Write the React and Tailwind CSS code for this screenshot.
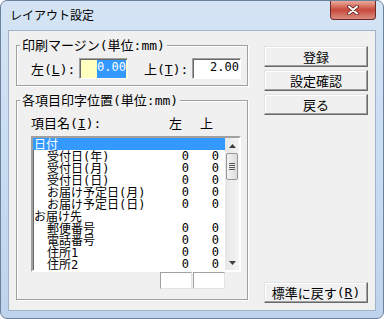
import React from "react";

const JP = "font-['Noto_Sans_CJK_JP',sans-serif]";
const MONO = "font-['DejaVu_Sans_Mono','Noto_Sans_CJK_JP',monospace]";

const rows = [
  { name: "日付", top: true, sel: true },
  { name: "受付日(年)", l: "0", r: "0" },
  { name: "受付日(月)", l: "0", r: "0" },
  { name: "受付日(日)", l: "0", r: "0" },
  { name: "お届け予定日(月)", l: "0", r: "0" },
  { name: "お届け予定日(日)", l: "0", r: "0" },
  { name: "お届け先", top: true },
  { name: "郵便番号", l: "0", r: "0" },
  { name: "電話番号", l: "0", r: "0" },
  { name: "住所1", l: "0", r: "0" },
  { name: "住所2", l: "0", r: "0" },
];

function Button({ children }) {
  return (
    <div className="h-[21px] w-[104px] flex items-center justify-center bg-[#f0f0f0] border border-t-[#e3e3e3] border-l-[#e3e3e3] border-r-[#696969] border-b-[#696969] shadow-[inset_-1px_-1px_0_#a0a0a0,inset_1px_1px_0_#ffffff] text-[13px] leading-[15px] text-black">
      {children}
    </div>
  );
}

function Arrow({ up }) {
  return (
    <svg width="7" height="4" viewBox="0 0 7 4">
      {up ? (
        <polygon points="0,4 7,4 3.5,0" fill="#404040" />
      ) : (
        <polygon points="0,0 7,0 3.5,4" fill="#404040" />
      )}
    </svg>
  );
}

export default function App() {
  return (
    <div className={`w-[384px] h-[319px] overflow-hidden rounded-[7px] border border-[#6a829c] bg-linear-to-b from-[#d4e4f5] to-[#bfd4ec] ${JP}`}>
      {/* title bar */}
      <div className="h-[29px] flex items-start justify-between">
        <div className="pl-[9px] pt-[6px] text-[12px] leading-[16px] text-black">レイアウト設定</div>
        <div className="mr-[7px] w-[46px] h-[19px] rounded-b-[4px] border border-t-0 border-[#6b2b26] bg-linear-to-b from-[#e9a99c] via-[#c7473a] to-[#d98c80] flex items-center justify-center">
          <svg width="12" height="10" viewBox="0 0 12 10">
            <path d="M2 1.5 L10 8.5 M10 1.5 L2 8.5" stroke="#5a1e18" strokeWidth="3.6" strokeLinecap="round" />
            <path d="M2 1.5 L10 8.5 M10 1.5 L2 8.5" stroke="#ffffff" strokeWidth="2" strokeLinecap="round" />
          </svg>
        </div>
      </div>

      {/* client area */}
      <div className="mx-[7px] h-[281px] flex border border-[#9fb3c9] bg-[#f0f0f0] text-black">
        {/* left column */}
        <div className="w-[239px] pl-[7px] flex flex-col">
          {/* group 1 */}
          <fieldset className="mt-[6px] h-[49px] w-[232px] border border-[#a0a0a0] shadow-[inset_1px_1px_0_#ffffff,1px_1px_0_#ffffff]">
            <legend className="ml-[3px] px-[2px] bg-[#f0f0f0] text-[13px] leading-[16px]">
              印刷マージン<span className={MONO}>(</span>単位<span className={MONO}>:mm)</span>
            </legend>
            <div className="mt-[4px] pl-[14px] flex items-start">
              <div className="w-[48px] text-[13px] leading-[21px]">
                左<span className={MONO}>(<span className="underline">L</span>):</span>
              </div>
              <div className="w-[49px] h-[21px] bg-[#ffffc0] border border-t-[#a0a0a0] border-l-[#a0a0a0] border-r-white border-b-white shadow-[inset_1px_1px_0_#696969] flex justify-end pr-[1px] pt-[1px]">
                <span className={`${MONO} text-[12px] leading-[15px] bg-[#3399ff] text-white`}>0.00</span>
              </div>
              <div className="ml-[16px] w-[48px] text-[13px] leading-[21px]">
                上<span className={MONO}>(<span className="underline">T</span>):</span>
              </div>
              <div className="w-[49px] h-[21px] bg-white border border-t-[#a0a0a0] border-l-[#a0a0a0] border-r-white border-b-white shadow-[inset_1px_1px_0_#696969] flex justify-end pr-[1px] pt-[1px]">
                <span className={`${MONO} text-[12px] leading-[15px]`}>2.00</span>
              </div>
            </div>
          </fieldset>

          {/* group 2 */}
          <fieldset className="mt-[6px] h-[208px] w-[232px] border border-[#a0a0a0] shadow-[inset_1px_1px_0_#ffffff,1px_1px_0_#ffffff]">
            <legend className="ml-[3px] px-[2px] bg-[#f0f0f0] text-[13px] leading-[16px]">
              各項目印字位置<span className={MONO}>(</span>単位<span className={MONO}>:mm)</span>
            </legend>
            <div className="mt-[7px] pl-[14px] flex text-[13px] leading-[13px]">
              <div className="w-[138px]">
                項目名<span className={MONO}>(<span className="underline">I</span>):</span>
              </div>
              <div className="w-[31px]">左</div>
              <div>上</div>
            </div>
            <div className="mt-[6px] ml-[14px] w-[210px] h-[136px] flex border-2 border-t-[#a0a0a0] border-l-[#a0a0a0] border-r-white border-b-white shadow-[inset_1px_1px_0_#696969] bg-white">
              <div className="w-[192px] flex flex-col pt-[0px]">
                {rows.map((r, i) => (
                  <div
                    key={i}
                    className={
                      r.sel
                        ? "h-[12px] flex items-center bg-[#3399ff] text-white text-[12px] leading-[12px] pr-[6px]"
                        : "h-[12px] flex items-center text-black text-[12px] leading-[12px] pr-[6px]"
                    }
                  >
                    <div className={r.top ? "flex-1 pl-[1px] whitespace-nowrap" : "flex-1 pl-[14px] whitespace-nowrap"}>
                      {r.name.split(/([()0-9])/).map((p, k) =>
                        /[()0-9]/.test(p) ? (
                          <span key={k} className={MONO}>{p}</span>
                        ) : (
                          <span key={k}>{p}</span>
                        )
                      )}
                    </div>
                    <div className={`w-[30px] text-right ${MONO}`}>{r.l}</div>
                    <div className={`w-[30px] text-right ${MONO}`}>{r.r}</div>
                  </div>
                ))}
              </div>
              {/* scrollbar */}
              <div className="w-[14px] flex flex-col bg-linear-to-r from-[#e6e6e6] to-[#f4f4f4]">
                <div className="h-[15px] flex items-center justify-center">
                  <Arrow up />
                </div>
                <div className="mx-[1px] h-[27px] rounded-[2px] border border-[#979797] bg-linear-to-r from-[#f4f4f4] to-[#dcdcdc] flex items-center justify-center">
                  <svg width="6" height="8" viewBox="0 0 6 8">
                    <path d="M0 0.5 H6 M0 2.5 H6 M0 4.5 H6 M0 6.5 H6" stroke="#5a5a5a" strokeWidth="1" />
                  </svg>
                </div>
                <div className="flex-1" />
                <div className="h-[15px] flex items-center justify-center">
                  <Arrow />
                </div>
              </div>
            </div>
            <div className="ml-[143px] flex gap-[1px]">
              <div className="w-[32px] h-[17px] bg-white border border-t-[#a0a0a0] border-l-[#a0a0a0] border-r-[#e3e3e3] border-b-[#e3e3e3]" />
              <div className="w-[32px] h-[17px] bg-white border border-t-[#a0a0a0] border-l-[#a0a0a0] border-r-[#e3e3e3] border-b-[#e3e3e3]" />
            </div>
          </fieldset>
        </div>

        {/* right column */}
        <div className="ml-[16px] w-[104px] pt-[15px] pb-[7px] flex flex-col gap-[3px]">
          <Button>登録</Button>
          <Button>設定確認</Button>
          <Button>戻る</Button>
          <div className="flex-1" />
          <Button>
            標準に戻す<span className={MONO}>(<span className="underline">R</span>)</span>
          </Button>
        </div>
      </div>
    </div>
  );
}
